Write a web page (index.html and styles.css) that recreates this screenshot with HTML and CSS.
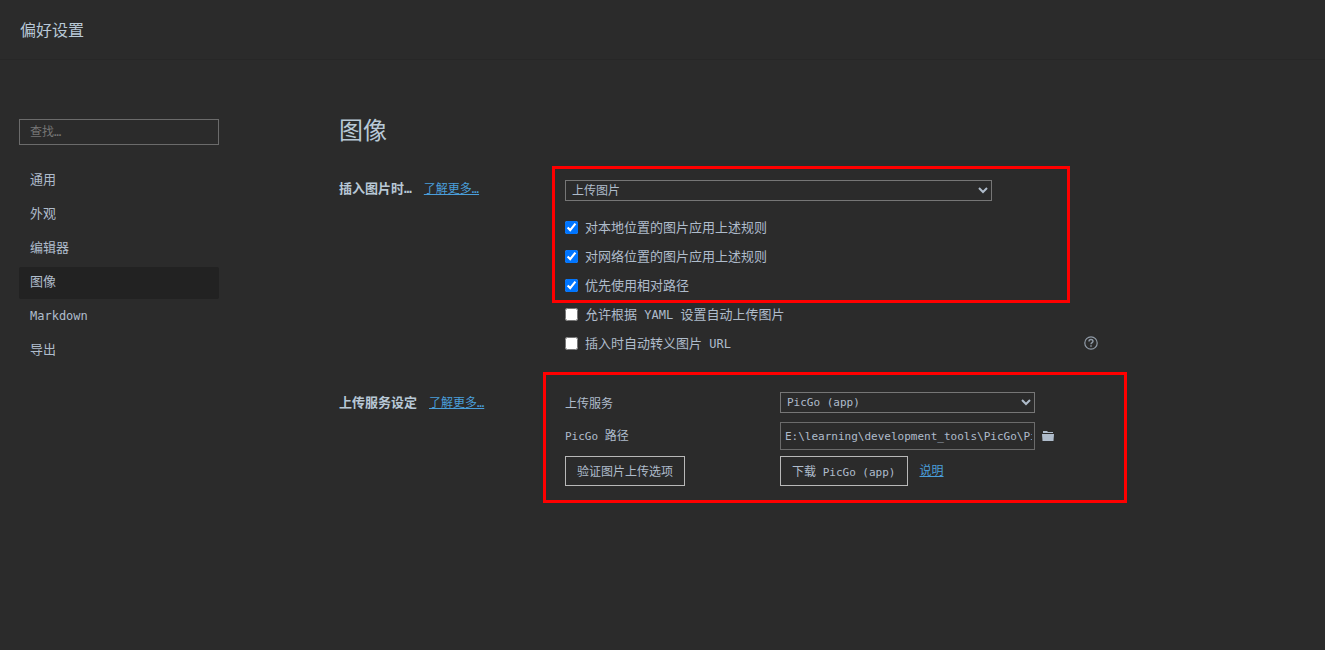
FILE: index.html
```html
<!DOCTYPE html>
<html lang="zh-CN">
<head>
<meta charset="utf-8">
<meta name="viewport" content="width=device-width, initial-scale=1">
<title>偏好设置</title>
<link rel="stylesheet" href="styles.css">
</head>
<body>
<header class="topbar">
  <h1 class="topbar-title">偏好设置</h1>
</header>
<div class="layout">
  <aside class="sidebar">
    <input class="search" type="text" placeholder="查找…" aria-label="查找">
    <nav class="nav">
      <a class="nav-item" href="#general">通用</a>
      <a class="nav-item" href="#appearance">外观</a>
      <a class="nav-item" href="#editor">编辑器</a>
      <a class="nav-item nav-item-active" href="#image" aria-current="page">图像</a>
      <a class="nav-item" href="#markdown"><span class="latin">Markdown</span></a>
      <a class="nav-item" href="#export">导出</a>
    </nav>
  </aside>
  <main class="panel">
    <h2 class="panel-title">图像</h2>

    <section class="setting">
      <div class="setting-head">
        <h3 class="setting-name">插入图片时…</h3>
        <a class="link" href="#insert-help">了解更多…</a>
      </div>
      <div class="setting-body">
        <div class="rules marked marked-rules">
          <select class="select select-action" aria-label="插入图片时">
            <option>上传图片</option>
          </select>
          <label class="check"><input class="box" type="checkbox" checked>对本地位置的图片应用上述规则</label>
          <label class="check"><input class="box" type="checkbox" checked>对网络位置的图片应用上述规则</label>
          <label class="check"><input class="box" type="checkbox" checked>优先使用相对路径</label>
        </div>
        <label class="check"><input class="box" type="checkbox"><span>允许根据<span class="latin"> YAML </span>设置自动上传图片</span></label>
        <div class="check-line">
          <label class="check"><input class="box" type="checkbox"><span>插入时自动转义图片<span class="latin"> URL</span></span></label>
          <button class="icon-button help" type="button" aria-label="帮助">
            <svg width="14" height="14" viewBox="0 0 14 14" fill="none" stroke="currentColor">
              <circle cx="7" cy="7" r="6.2" stroke-width="1.2"/>
              <path d="M5 5.5C5 4.2 5.8 3.5 7 3.5S9 4.3 9 5.3C9 6.6 7 6.6 7 8.3" stroke-width="1.4"/>
              <path d="M7 9.3V10.7" stroke-width="1.4"/>
            </svg>
          </button>
        </div>
      </div>
    </section>

    <section class="setting">
      <div class="setting-head setting-head-service">
        <h3 class="setting-name">上传服务设定</h3>
        <a class="link" href="#upload-help">了解更多…</a>
      </div>
      <div class="setting-body">
        <div class="service marked marked-service">
          <label class="field-label" for="service">上传服务</label>
          <select class="select select-service" id="service">
            <option>PicGo (app)</option>
          </select>
          <label class="field-label" for="path"><span class="latin-small">PicGo </span>路径</label>
          <div class="path-line">
            <input class="path" id="path" type="text" value="E:\learning\development_tools\PicGo\PicGo.exe">
            <button class="icon-button folder" type="button" aria-label="选择文件夹">
              <svg width="12" height="10" viewBox="0 0 12 10" fill="currentColor">
                <path d="M1 0H5L6 1H11V2H1Z"/>
                <path d="M0 3H12L11.5 10H.5Z"/>
              </svg>
            </button>
          </div>
          <div><button class="button" type="button">验证图片上传选项</button></div>
          <div class="download-line">
            <button class="button" type="button">下载<span class="latin-small"> PicGo (app)</span></button>
            <a class="link" href="#readme">说明</a>
          </div>
        </div>
      </div>
    </section>
  </main>
</div>
</body>
</html>
```
FILE: styles.css
```css
* {
  box-sizing: border-box;
}

body {
  margin: 0;
  min-height: 100vh;
  background: #2b2b2b;
  color: #afbccb;
  font: 13px/20px "DejaVu Sans Mono", "Noto Sans CJK SC", monospace;
}

h1, h2, h3 {
  margin: 0;
}

input, select, button {
  margin: 0;
  color: inherit;
  font-family: inherit;
}

.latin {
  font-size: 12px;
}

.latin-small {
  font-size: 11px;
}

.topbar {
  height: 60px;
  padding: 19px 20px;
  border-bottom: 1px solid #272727;
}

.topbar-title {
  color: #b8c8d6;
  font-size: 16px;
  line-height: 24px;
  font-weight: 400;
}

.layout {
  display: flex;
  gap: 120px;
  padding: 55px 19px 40px;
}

.sidebar {
  flex: 0 0 200px;
  padding-top: 4px;
}

.search {
  display: block;
  width: 100%;
  height: 26px;
  padding: 0 10px;
  border: 1px solid #6b6b6b;
  background: transparent;
  font-size: 12px;
}

.search::placeholder {
  color: #757575;
}

.nav {
  display: flex;
  flex-direction: column;
  gap: 2px;
  margin-top: 20px;
}

.nav-item {
  padding: 5px 11px 7px;
  border-radius: 2px;
  color: inherit;
  text-decoration: none;
}

.nav-item-active {
  background: #222;
}

.panel {
  flex: 0 1 760px;
}

.panel-title {
  margin-bottom: 33px;
  color: #b8c8d6;
  font-size: 24px;
  line-height: 32px;
  font-weight: 400;
}

.setting {
  display: grid;
  grid-template-columns: 226px 1fr;
  margin-bottom: 34px;
}

.setting-head {
  display: flex;
  align-items: baseline;
  align-self: start;
  gap: 12px;
  margin-top: -1px;
}

.setting-head-service {
  margin-top: 1px;
}

.setting-name {
  color: #b8c8d6;
  font-size: 13px;
  line-height: 20px;
  font-weight: 700;
}

.link {
  color: #4a9eda;
  font-size: 12px;
}

/* Red frames drawn over the highlighted groups */
.marked {
  position: relative;
}

.marked::after {
  content: "";
  position: absolute;
  border: 3px solid #f00;
  pointer-events: none;
}

.marked-rules::after {
  inset: -14px 29px -3px -13px;
}

.marked-service::after {
  inset: -20px -28px -17px -22px;
}

.select {
  display: block;
  width: 100%;
  height: 21px;
  padding: 0 2px;
  border: 1px solid #767676;
  border-radius: 0;
  background: #2b2b2b;
  font-size: 12px;
}

.select-service {
  margin-bottom: 3px;
  font-size: 11px;
}

.select-action {
  width: 80%;
  margin-bottom: 12px;
}

.check {
  display: flex;
  align-items: center;
  gap: 7px;
  height: 29px;
}

.box {
  width: 13px;
  height: 13px;
}

.check-line {
  display: flex;
  align-items: center;
  justify-content: space-between;
}

.icon-button {
  display: flex;
  padding: 0;
  border: 0;
  background: none;
}

.help {
  padding: 0 1px 2px 0;
  color: #8f9aa6;
}

.service {
  display: grid;
  grid-template-columns: 215px 255px;
  row-gap: 6px;
}

.field-label {
  align-self: center;
  font-size: 12px;
}

.path-line {
  display: flex;
  align-items: center;
}

.path {
  flex: 0 0 100%;
  height: 28px;
  padding: 0 2px 0 4px;
  border: 1px solid #6b6b6b;
  background: transparent;
  font-size: 11px;
}

.folder {
  margin-left: 7px;
}

.button {
  height: 30px;
  padding: 0 11px 2px;
  border: 1px solid #b8b8b8;
  background: transparent;
  font-size: 12px;
}

.download-line {
  display: flex;
  align-items: center;
  gap: 12px;
}
```
